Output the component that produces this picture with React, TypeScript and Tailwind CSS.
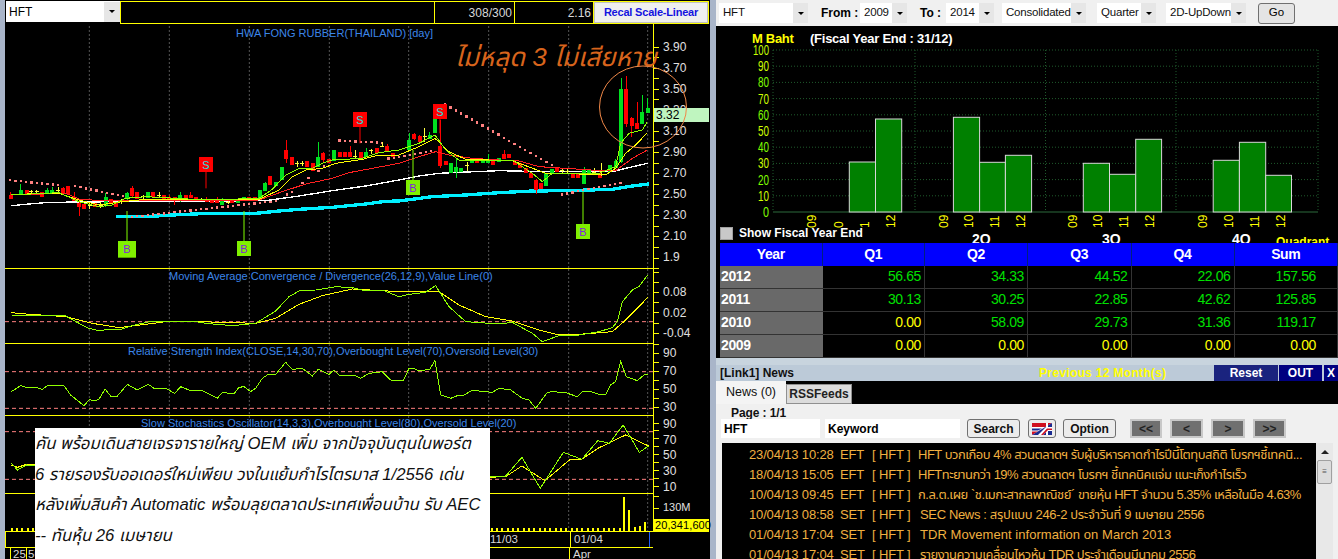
import React from 'react';

const SANS = "font-['Liberation_Sans','Noto_Sans_Thai','Noto_Sans',sans-serif]";

// all chart coordinates below are in 3x page pixels, read off the screenshot
type Pt = [number, number];
const line = (pts: Pt[], dy = 0) => pts.map(([x, y]) => `${x},${y + dy}`).join(' ');
const z2 = (pts: Pt[]): Pt[] => pts.map(([x, y]) => [x + 1200, y]);

const GRID_X = [271, 511, 751, 991, 1229, 1469, 1709, 1946];

// kind, x, bodyTop, bodyBottom, wickHigh, wickLow
type Candle = ['r' | 'g', number, number, number, number?, number?];
const CANDLES: Candle[] = [
  ['r', 35, 585, 597, 575], ['g', 65, 570, 583, 552], ['r', 83, 571, 583], ['r', 130, 577, 590],
  ['g', 145, 570, 583, 565], ['g', 160, 570, 583, 560], ['r', 193, 565, 580, 560], ['r', 208, 558, 583],
  ['r', 225, 590, 603, 577], ['r', 241, 610, 622, 600, 648], ['r', 256, 613, 627], ['r', 288, 610, 620],
  ['g', 320, 590, 615, 578, 620], ['r', 336, 598, 612], ['r', 352, 610, 620], ['g', 385, 578, 597, 575, 600],
  ['r', 400, 563, 587, 558, 590], ['r', 415, 577, 598], ['g', 448, 576, 595], ['r', 463, 576, 592],
  ['r', 496, 586, 597], ['r', 511, 592, 600, 586], ['r', 527, 592, 602, 590, 615], ['g', 544, 586, 597, 575, 607],
  ['r', 560, 586, 597], ['r', 575, 586, 595, 577], ['r', 592, 590, 600], ['r', 623, 598, 607, 590],
  ['r', 640, 600, 608], ['r', 655, 600, 610, 592], ['g', 670, 603, 615, 595], ['r', 700, 603, 610],
  ['g', 718, 598, 608], ['g', 735, 591, 600], ['r', 751, 591, 600], ['r', 767, 591, 600],
  ['g', 783, 570, 597], ['g', 799, 548, 572, 545], ['r', 814, 528, 555], ['g', 830, 545, 558],
  ['g', 848, 500, 540], ['r', 862, 450, 478, 420, 490], ['r', 878, 472, 495], ['r', 925, 483, 500],
  ['r', 941, 490, 512], ['g', 958, 470, 500, 426], ['r', 973, 458, 480, 455, 485], ['r', 989, 478, 490],
  ['g', 1006, 450, 483], ['r', 1022, 456, 472], ['r', 1038, 456, 472], ['r', 1053, 456, 472, 437],
  ['r', 1086, 456, 474], ['g', 1102, 456, 472, 445], ['r', 1133, 445, 458], ['r', 1165, 437, 455, 432],
  ['r', 1182, 458, 470], ['g', 1230, 420, 450, 398], ['r', 1245, 403, 417, 400, 420], ['r', 1262, 408, 425, 405],
  ['g', 1292, 405, 418, 395], ['g', 1308, 358, 400], ['r', 1324, 437, 497, 360, 505], ['r', 1340, 483, 495],
  ['g', 1357, 490, 518], ['g', 1372, 500, 515, 477, 533], ['g', 1387, 505, 515], ['g', 1420, 478, 490],
  ['r', 1435, 473, 490], ['g', 1452, 478, 488], ['g', 1468, 478, 488, 463], ['r', 1483, 480, 495],
  ['g', 1500, 473, 485], ['r', 1516, 462, 478, 450], ['r', 1530, 462, 475], ['r', 1548, 485, 495],
  ['r', 1563, 490, 503], ['r', 1580, 505, 520], ['r', 1595, 520, 533], ['r', 1612, 540, 570, 538, 583],
  ['r', 1627, 550, 568], ['g', 1642, 518, 558], ['g', 1659, 507, 518], ['r', 1675, 505, 515], ['r', 1722, 520, 533],
  ['r', 1738, 522, 533], ['g', 1755, 510, 552, 500], ['g', 1770, 510, 520], ['r', 1802, 520, 533],
  ['g', 1834, 495, 515], ['g', 1850, 482, 505, 478], ['g', 1866, 268, 485, 233, 490], ['r', 1882, 268, 372, 228, 382],
  ['r', 1898, 355, 378, 350, 410], ['r', 1914, 368, 388, 305], ['g', 1930, 335, 372, 285], ['g', 1946, 325, 340, 295],
];
// doji candles: x, y, high, low
const CROSSES: [number, number, number, number][] = [
  [97, 575, 570, 583], [113, 575, 570, 583], [177, 570, 560, 578], [272, 615, 606, 628], [305, 615, 606, 625],
  [368, 605, 598, 612], [432, 590, 584, 597], [480, 585, 575, 592], [608, 597, 595, 600], [687, 606, 600, 612],
  [894, 490, 482, 500], [909, 490, 482, 497], [1069, 468, 450, 475], [1117, 452, 447, 462], [1150, 440, 425, 442],
  [1277, 410, 385, 425], [1405, 497, 485, 513], [1690, 512, 505, 518], [1705, 513, 505, 520], [1785, 518, 505, 525],
  [1806, 515, 490, 528],
];

const MA_WHITE: Pt[] = [[37, 617], [90, 612], [150, 607], [470, 604], [800, 602], [900, 588], [1000, 572], [1100, 558], [1200, 540], [1260, 528], [1320, 520], [1380, 517], [1500, 512], [1640, 515], [1840, 515], [1880, 505], [1946, 490]];
const MA_CYAN: Pt[] = [[350, 650], [440, 650], [520, 645], [630, 640], [770, 640], [840, 633], [900, 628], [1000, 622], [1100, 612], [1160, 604], ...z2([[0, 603], [100, 590], [200, 585], [300, 578], [400, 573], [500, 572], [640, 568], [700, 558], [750, 552]])];
const MA_RED: Pt[] = [[37, 585], [200, 580], [240, 597], [280, 600], [400, 600], [620, 603], [780, 600], [850, 575], [920, 552], [1000, 535], [1050, 518], [1120, 505], ...z2([[0, 490], [60, 470], [110, 455], [150, 465], [220, 475], [300, 480], [350, 480], [420, 500], [500, 505], [620, 513], [650, 512], [700, 475], [745, 450]])];
const MA_YELLOW: Pt[] = [[37, 583], [180, 580], [240, 600], [300, 615], [370, 605], [440, 598], [620, 600], [780, 598], [840, 570], [880, 530], [920, 510], [970, 505], [1010, 490], [1090, 478], [1140, 465], ...z2([[0, 465], [60, 440], [108, 415], [150, 455], [200, 478], [340, 482], [420, 512], [440, 520], [540, 522], [620, 525], [650, 505], [680, 460], [710, 435], [745, 398]])];
const MA_LIME: Pt[] = [[37, 585], [180, 578], [240, 605], [300, 620], [340, 615], [380, 595], [440, 590], [620, 600], [780, 595], [820, 568], [860, 525], [900, 505], [940, 505], [970, 490], [1000, 480], [1090, 475], [1140, 458], ...z2([[0, 450], [60, 430], [108, 405], [140, 450], [180, 480], [340, 480], [400, 520], [430, 545], [460, 520], [600, 520], [650, 500], [665, 430], [690, 400], [730, 390], [745, 365]])];

const sar = (a: Pt, b: Pt) => {
  const n = Math.round((b[0] - a[0]) / 16);
  return Array.from({ length: n + 1 }, (_, i): Pt => [a[0] + i * 16, a[1] + ((b[1] - a[1]) * i) / Math.max(n, 1)]);
};
const SAR: Pt[] = [
  ...sar([30, 537], [178, 552]), ...sar([225, 555], [365, 585]), ...sar([395, 647], [830, 600]),
  [860, 580], [875, 572], [907, 545], [925, 530], [955, 510], [972, 495], ...sar([1018, 418], [1150, 425]),
  ...sar([1165, 472], [1300, 450]), ...sar([1335, 310], [1670, 500]), ...sar([1685, 580], [1865, 545]),
];

const MACD_LIME: Pt[] = [[37, 150], [200, 153], [240, 175], [270, 190], [300, 197], [340, 192], [370, 192], [400, 182], [460, 168], [580, 168], [620, 175], [700, 182], [770, 175], [830, 138], [870, 95], [900, 78], [950, 75], [1010, 65], [1060, 68], [1090, 75], [1150, 75], ...z2([[0, 95], [30, 88], [80, 82], [110, 62], [150, 125], [200, 170], [300, 177], [340, 172], [400, 205], [430, 230], [480, 212], [540, 210], [600, 200], [640, 188], [655, 170], [670, 110], [700, 75], [720, 65], [746, 30]])];
const MACD_YELLOW: Pt[] = [[37, 143], [80, 147], [200, 155], [280, 175], [360, 188], [440, 178], [500, 170], [600, 170], [770, 175], [830, 160], [900, 118], [970, 92], [1060, 72], ...z2([[0, 80], [120, 80], [180, 120], [260, 155], [340, 168], [420, 195], [480, 210], [540, 208], [640, 200], [680, 165], [720, 125], [746, 97]])];
const RSI: Pt[] = [[37, 380], [65, 362], [80, 367], [110, 367], [130, 373], [145, 362], [195, 362], [215, 390], [255, 422], [272, 403], [285, 408], [300, 403], [318, 372], [335, 393], [355, 393], [385, 358], [415, 375], [448, 358], [465, 370], [500, 370], [527, 385], [545, 365], [570, 375], [605, 375], [655, 400], [670, 382], [705, 387], [720, 367], [735, 365], [755, 380], [770, 370], [790, 340], [805, 330], [830, 328], [860, 292], [880, 313], [910, 310], [940, 333], [958, 313], [990, 328], [1005, 315], [1020, 330], [1065, 330], [1085, 340], [1110, 325], [1150, 320], [1175, 345], ...z2([[0, 347], [14, 345], [30, 310], [45, 310], [60, 318], [92, 313], [108, 287], [125, 390], [155, 400], [175, 392], [190, 393], [220, 376], [280, 382], [300, 370], [335, 375], [370, 400], [390, 405], [410, 430], [445, 382], [460, 380], [500, 383], [535, 395], [550, 380], [575, 380], [600, 388], [620, 388], [635, 360], [650, 350], [665, 290], [682, 335], [715, 347], [735, 330], [746, 328]])];
const sto = (pts: Pt[]): Pt[] => pts.map(([x, y]) => [x * 1.382, y]);
const STO_LIME = sto([[27, 130], [40, 150], [60, 135], [1060, 170], [1100, 168], [1135, 112], [1175, 205], [1225, 97], [1265, 118], [1300, 62], [1325, 70], [1355, 15], [1390, 97], [1410, 78]]);
const STO_YELLOW = sto([[27, 135], [40, 142], [60, 133], [1060, 172], [1100, 170], [1135, 138], [1185, 182], [1240, 118], [1265, 118], [1300, 85], [1360, 45], [1410, 78]]);

const VOLUME = Array.from({ length: 115 }, (_, i) => 35 + i * 16);

const Poly = ({ pts, color, width = 3, dy = 0 }: { pts: Pt[]; color: string; width?: number; dy?: number }) => (
  <polyline points={line(pts, dy)} fill="none" stroke={color} strokeWidth={width} shapeRendering="crispEdges" />
);

const Grid = ({ y, h }: { y: number; h: number }) => (
  <>
    {GRID_X.map((x) => (
      <line key={x} x1={x} x2={x} y1={y} y2={y + h} stroke="#555" strokeWidth={3} strokeDasharray="6 6" />
    ))}
  </>
);

const Level = ({ y }: { y: number }) => (
  <line x1={18} x2={1962} y1={y} y2={y} stroke="#ff7f7f" strokeWidth={3} strokeDasharray="12 9" />
);

const Marker = ({ x, y, w, h, kind, y1, y2 }: { x: number; y: number; w: number; h: number; kind: 'S' | 'B'; y1: number; y2: number }) => {
  const sell = kind === 'S';
  return (
    <g>
      <line x1={x + w / 2} x2={x + w / 2} y1={y1} y2={y2} stroke={sell ? '#ff0000' : '#80ff00'} strokeWidth={3} />
      <rect x={x} y={y} width={w} height={h} fill={sell ? '#ff0000' : '#80f000'} />
      <text x={x + w / 2} y={y + h / 2 + 12} textAnchor="middle" fontSize={33} fontFamily="Liberation Sans" fill={sell ? '#20e0e0' : '#8020e0'}>
        {kind}
      </text>
    </g>
  );
};

const PriceChart = () => (
  <svg className="absolute inset-0 h-full w-full" viewBox="18 72 1944 732" preserveAspectRatio="none">
    <Grid y={78} h={726} />
    <Poly pts={MA_CYAN} color="#00f0ff" width={10} />
    <Poly pts={MA_WHITE} color="#ffffff" width={4} />
    {SAR.map(([x, y], i) => (
      <rect key={i} x={x} y={y} width={7} height={7} fill="#ff8080" shapeRendering="crispEdges" />
    ))}
    {CANDLES.map(([kind, x, top, bot, hi, lo], i) => {
      const color = kind === 'r' ? '#ff0000' : '#00e020';
      return (
        <g key={i} shapeRendering="crispEdges">
          <rect x={x - 1.5} y={hi ?? top} width={3} height={(lo ?? bot) - (hi ?? top)} fill={color} />
          <rect x={x - 6} y={top} width={12} height={bot - top} fill={color} />
        </g>
      );
    })}
    {CROSSES.map(([x, y, hi, lo], i) => (
      <g key={i} shapeRendering="crispEdges">
        <rect x={x - 1.5} y={hi} width={3} height={lo - hi} fill="#ffff40" />
        <rect x={x - 6} y={y - 1.5} width={12} height={3} fill="#ffff40" />
      </g>
    ))}
    <Poly pts={MA_RED} color="#ff2020" />
    <Poly pts={MA_YELLOW} color="#ffff00" />
    <Poly pts={MA_LIME} color="#90ff00" />
    <Marker kind="S" x={600} y={471} w={42} h={45} y1={516} y2={565} />
    <Marker kind="S" x={1062} y={336} w={42} h={45} y1={381} y2={430} />
    <Marker kind="S" x={1302} y={312} w={42} h={45} y1={357} y2={400} />
    <Marker kind="B" x={357} y={723} w={54} h={50} y1={633} y2={723} />
    <Marker kind="B" x={714} y={723} w={42} h={45} y1={633} y2={723} />
    <Marker kind="B" x={1221} y={540} w={42} h={45} y1={450} y2={540} />
    <Marker kind="B" x={1731} y={672} w={42} h={45} y1={575} y2={672} />
  </svg>
);

const AXIS_TICKS: Record<string, number[]> = {
  price: Array.from({ length: 22 }, (_, i) => 23 + i * 10.55),
  macd: Array.from({ length: 7 }, (_, i) => 3 + i * 10.2),
  rsi: Array.from({ length: 8 }, (_, i) => 0 + i * 9),
  sto: Array.from({ length: 10 }, (_, i) => 7 + i * 7.9),
  vol: [2, 14, 26],
};

function Axis({ ticks, children, className }: { ticks: number[]; children: React.ReactNode; className: string }) {
  return (
    <div className={`relative w-[56px] border-l border-[#ffff00] text-[12px] leading-none text-[#e0e0e0] ${className}`}>
      <svg className="absolute left-0 top-0 h-full w-[6px]">
        {ticks.map((y) => (
          <line key={y} x1={0} x2={5} y1={y} y2={y} stroke="#ffff00" strokeWidth={1} shapeRendering="crispEdges" />
        ))}
      </svg>
      {children}
    </div>
  );
}

const Label = ({ value, className }: { value: string; className: string }) => (
  <div className={`flex items-center pl-[9px] ${className}`}>{value}</div>
);

function Pane({ className, title, titleClass, axis, children }: { className: string; title?: string; titleClass?: string; axis: React.ReactNode; children: React.ReactNode }) {
  return (
    <div className={`flex ${className}`}>
      <div className="relative w-[648px] border-b border-[#ffff00]">
        {children}
        {title && <div className={`absolute whitespace-nowrap text-[11px] leading-none text-[#3c86e8] ${titleClass}`}>{title}</div>}
      </div>
      {axis}
    </div>
  );
}

const DropArrow = ({ className = 'w-[15px]' }: { className?: string }) => (
  <div className={`flex h-[20px] items-center justify-center bg-[#e6e6e6] ${className}`}>
    <span className="h-0 w-0 border-x-[3px] border-t-[3px] border-x-transparent border-t-black" />
  </div>
);

function Field({ text, fieldClass, arrowClass, wrapClass }: { text: string; fieldClass: string; arrowClass?: string; wrapClass?: string }) {
  return (
    <div className={`flex items-center ${wrapClass ?? ''}`}>
      <div className={`flex h-[20px] items-center bg-white pl-[4px] text-[11.5px] tracking-[-0.2px] text-[#111] ${fieldClass}`}>{text}</div>
      <DropArrow className={arrowClass} />
    </div>
  );
}

const QUARTER_LABELS: [number, string][] = [
  [812, '09'], [839, '0'], [865, '1'], [891, '12'],
  [944, '09'], [969, '10'], [995, '11'], [1021, '12'],
  [1073, '09'], [1098, '10'], [1124, '11'], [1150, '12'],
  [1203, '09'], [1229, '10'], [1255, '11'], [1281, '12'],
];
const BAR_RECTS: [number, number, number][] = [
  [849.3, 26.2, 162], [875.5, 26.2, 119],
  [953.4, 26.2, 117.3], [979.6, 25.8, 162.3], [1005.4, 26.2, 155.3],
  [1083.3, 26.2, 163.3], [1109.5, 26.2, 174.3], [1135.7, 25.9, 139.3],
  [1213.2, 26.2, 160.3], [1239.4, 26.3, 142.3], [1265.7, 25.8, 175.3],
];

const FundChart = () => (
  <svg className="absolute inset-0 h-full w-full" viewBox="716 26 622 217">
    {Array.from({ length: 11 }, (_, i) => {
      const y = 212 - i * 16.2;
      return (
        <g key={i}>
          <line x1={773} x2={1318} y1={y} y2={y} stroke={i === 0 ? '#2c6b3c' : '#1f5a2c'} strokeDasharray={i === 0 ? undefined : '1 2'} />
          <text x={769} y={y + 5} textAnchor="end" fontSize={14} fontFamily="Liberation Sans" fill={i >= 10 ? '#c8ff00' : i % 2 ? '#d0ff00' : '#80ff00'} textLength={i === 10 ? 16 : i === 0 ? 6 : 11} lengthAdjust="spacingAndGlyphs">
            {i * 10}
          </text>
        </g>
      );
    })}
    {[773, 915, 1045.5, 1176, 1318].map((x) => (
      <line key={x} x1={x} x2={x} y1={50} y2={212} stroke="#1f5a2c" strokeDasharray="1 2" />
    ))}
    {BAR_RECTS.map(([x, w, top]) => (
      <rect key={x} x={x} y={top} width={w} height={212 - top} fill="#008000" stroke="#d8d8d8" strokeWidth={1} />
    ))}
    {QUARTER_LABELS.map(([x, t], i) => (
      <text key={i} transform={`translate(${x + 4} 228) rotate(-90)`} fontSize={12} fontFamily="Liberation Sans" fill="#ffff00">
        {t}
      </text>
    ))}
    {[['2Q', 972], ['3Q', 1102], ['4Q', 1232]].map(([t, x]) => (
      <text key={t as string} x={x as number} y={244} fontSize={14} fontWeight="bold" fontFamily="Liberation Sans" fill="#ffffff">
        {t}
      </text>
    ))}
    <text x={1276} y={246} fontSize={12} fontWeight="bold" fontFamily="Liberation Sans" fill="#ffff00">
      Quadrant
    </text>
  </svg>
);

const TABLE = [
  ['2012', '56.65', '34.33', '44.52', '22.06', '157.56'],
  ['2011', '30.13', '30.25', '22.85', '42.62', '125.85'],
  ['2010', '0.00', '58.09', '29.73', '31.36', '119.17'],
  ['2009', '0.00', '0.00', '0.00', '0.00', '0.00'],
];
const TABLE_COLS = 'grid grid-cols-[102.5px_102.5px_103px_103.5px_103px_1fr]';

// date, source, title, spacing of the title (the Thai face here runs wider than the original's)
const NEWS = [
  ['23/04/13 10:28', 'EFT', 'HFT บวกเกือบ 4% สวนตลาดฯ รับผู้บริหารคาดกำไรปีนี้โตทุบสถิติ โบรกฯชี้เทคนิ...', 'tracking-[-0.5px]'],
  ['18/04/13 15:05', 'EFT', 'HFTทะยานกว่า 19% สวนตลาดฯ โบรกฯ ชี้เทคนิคแจ่ม แนะเก็งกำไรเร็ว', 'tracking-[-0.5px]'],
  ['10/04/13 09:45', 'EFT', 'ก.ล.ต.เผย `ช.เมกะสากลพาณิชย์´ ขายหุ้น HFT จำนวน 5.35% เหลือในมือ 4.63%', 'tracking-[-0.5px]'],
  ['10/04/13 08:58', 'SET', 'SEC News : สรุปแบบ 246-2 ประจำวันที่ 9 เมษายน 2556', 'tracking-[-0.35px] pl-[2px]'],
  ['01/04/13 17:04', 'SET', 'TDR Movement information on March 2013', 'tracking-[0.05px] pl-[2px]'],
  ['01/04/13 17:04', 'SET', 'รายงานความเคลื่อนไหวหุ้น TDR ประจำเดือนมีนาคม 2556', 'tracking-[-0.5px] pl-[2px]'],
];

const OVERLAY = [
  'คัน พร้อมเดินสายเจรจารายใหญ่ OEM เพิ่ม จากปัจจุบันตุนในพอร์ต',
  '6 รายรองรับออเดอร์ใหม่เพียบ วงในแย้มกำไรไตรมาส 1/2556 เด่น',
  'หลังเพิ่มสินค้า Automatic พร้อมลุยตลาดประเทศเพื่อนบ้าน รับ AEC',
  '-- ทันหุ้น 26 เมษายน',
];

const Btn = ({ children, className }: { children: React.ReactNode; className: string }) => (
  <div className={`flex h-[19px] items-center justify-center rounded-[3px] border border-[#707070] bg-[#ececec] text-[12px] font-bold text-[#111] ${className}`}>{children}</div>
);

const NavBtn = ({ children, className }: { children: React.ReactNode; className: string }) => (
  <div className={`flex h-[19px] items-center justify-center border-2 border-[#c8c8c8] bg-[#707070] text-[12px] text-[#222] ${className}`}>{children}</div>
);

export default function App() {
  return (
    <div className={`relative flex h-[559px] w-[1338px] overflow-hidden bg-[#a9b5c9] ${SANS}`}>
      <div className="ml-[5px] w-[705px] bg-black">
        {/* top strip */}
        <div className="flex h-[24px] pl-px pt-px">
          <div className="flex h-[21px] w-[114px] items-center bg-white">
            <span className="flex-1 pl-[3px] text-[12px] text-black">HFT</span>
            <DropArrow className="w-[16px]" />
          </div>
          <div className="flex h-[23px] w-[589px] border border-[#ffff00] text-[12px] text-[#d8d8d8]">
            <div className="w-[313px]" />
            <div className="flex w-[80px] items-center justify-end border-l border-[#ffff00] pr-[2px]">308/300</div>
            <div className="flex w-[80px] items-center justify-end border-x border-[#ffff00] pr-[2px]">2.16</div>
            <div className="flex w-[114px] items-center justify-center border border-[#c0c0c0] bg-[#efefef] text-[11px] font-bold tracking-[-0.2px] text-[#1414e0]">Recal Scale-Linear</div>
          </div>
        </div>

        <Pane
          className="h-[245px]"
          title="HWA FONG RUBBER(THAILAND) [day]"
          titleClass="left-[231px] top-[4px]"
          axis={
            <Axis ticks={AXIS_TICKS.price} className="pt-[12px]">
              {['3.90', '3.70', '3.50', '3.30', '3.10', '2.90', '2.70', '2.50', '2.30', '2.10', '1.9'].map((v) => (
                <Label key={v} value={v} className="h-[21.1px]" />
              ))}
            </Axis>
          }
        >
          <PriceChart />
        </Pane>

        <Pane
          className="h-[75px]"
          title="Moving Average Convergence / Divergence(26,12,9),Value Line(0)"
          titleClass="left-[164px] top-[2px]"
          axis={
            <Axis ticks={AXIS_TICKS.macd} className="pt-[13px]">
              {['0.08', '0.02', '-0.04'].map((v) => (
                <Label key={v} value={v} className="h-[20.5px]" />
              ))}
            </Axis>
          }
        >
          <svg className="absolute inset-0 h-full w-full" viewBox="18 807 1944 222" preserveAspectRatio="none">
            <Grid y={807} h={222} />
            <Level y={965} />
            <Poly pts={MACD_YELLOW} color="#ffff00" dy={795} />
            <Poly pts={MACD_LIME} color="#90ff00" dy={795} />
          </svg>
        </Pane>

        <Pane
          className="h-[72px]"
          title="Relative Strength Index(CLOSE,14,30,70),Overbought Level(70),Oversold Level(30)"
          titleClass="left-[123px] top-[2px]"
          axis={
            <Axis ticks={AXIS_TICKS.rsi} className="">
              {['90', '70', '50', '30'].map((v) => (
                <Label key={v} value={v} className="h-[18px]" />
              ))}
            </Axis>
          }
        >
          <svg className="absolute inset-0 h-full w-full" viewBox="18 1032 1944 213" preserveAspectRatio="none">
            <Grid y={1032} h={213} />
            <Level y={1115} />
            <Level y={1225} />
            <Poly pts={RSI} color="#90ff00" dy={795} />
          </svg>
        </Pane>

        <Pane
          className="h-[78px]"
          title="Slow Stochastics Oscillator(14,3,3),Overbought Level(80),Oversold Level(20)"
          titleClass="left-[136px] top-[2px]"
          axis={
            <Axis ticks={AXIS_TICKS.sto} className="">
              {['90', '70', '50', '30', '10'].map((v) => (
                <Label key={v} value={v} className="h-[15.75px]" />
              ))}
            </Axis>
          }
        >
          <svg className="absolute inset-0 h-full w-full" viewBox="18 1248 1944 231" preserveAspectRatio="none">
            <Grid y={1248} h={231} />
            <Level y={1295} />
            <Level y={1438} />
            <Poly pts={STO_YELLOW} color="#ffff00" dy={1260} />
            <Poly pts={STO_LIME} color="#90ff00" dy={1260} />
          </svg>
        </Pane>

        <Pane
          className="h-[38px]"
          axis={
            <Axis ticks={AXIS_TICKS.vol} className="pt-[6px]">
              <Label value="130M" className="h-[15px] text-[11px]" />
              <div className="mt-[4px] flex h-[13px] w-[55px] items-center bg-[#ffff00] pl-[1px] text-[11px] tracking-[0.1px] text-black">20,341,600</div>
            </Axis>
          }
        >
          <svg className="absolute inset-0 h-full w-full" viewBox="18 1482 1944 111" preserveAspectRatio="none">
            <Grid y={1482} h={111} />
            {VOLUME.map((x) => (
              <rect key={x} x={x} y={1584} width={6} height={9} fill="#ffff00" shapeRendering="crispEdges" />
            ))}
            {[[1872, 1491], [1887, 1530], [1905, 1581], [1920, 1578], [1935, 1565]].map(([x, y]) => (
              <rect key={x} x={x} y={y} width={6} height={1593 - y} fill="#ffff00" shapeRendering="crispEdges" />
            ))}
          </svg>
        </Pane>

        {/* time axis */}
        <div className="w-[648px] text-[11.5px] text-[#d8d8d8]">
          <div className="flex h-[15px] border-l border-[#ffff00]">
            <div className="flex w-[564px] items-center justify-end pr-[52px]">11/03</div>
            <div className="flex w-[80px] items-center border-x border-x-[#ffff00] border-r-[#2060ff] pl-[3px]">01/04</div>
          </div>
          <div className="flex h-[12px] border-t border-[#ffff00]">
            <div className="ml-[5px] w-[17px] border-x border-[#ffff00] pl-[2px] leading-[12px]">25</div>
            <div className="w-[542px] pl-[1px] leading-[12px]">56</div>
            <div className="border-l border-[#ffff00] pl-[3px] leading-[12px]">Apr</div>
          </div>
        </div>
      </div>

      <div className="ml-[6px] flex w-[622px] flex-col bg-black">
        {/* filter bar */}
        <div className="flex h-[26px] items-center bg-[#f0f0f0] pl-[3px] text-[12px] text-black">
          <Field text="HFT" fieldClass="w-[74px]" />
          <span className="ml-[13px] w-[39px] font-bold">From :</span>
          <Field text="2009" fieldClass="w-[32px]" />
          <span className="ml-[13px] w-[26px] font-bold">To :</span>
          <Field text="2014" fieldClass="w-[33px]" />
          <Field text="Consolidated" fieldClass="w-[69px]" wrapClass="ml-[8px]" />
          <Field text="Quarter" fieldClass="w-[44px]" wrapClass="ml-[11px]" />
          <Field text="2D-UpDown" fieldClass="w-[65px]" wrapClass="ml-[10px]" />
          <div className="ml-[12px] flex h-[21px] w-[37px] items-center justify-center rounded-[3px] border border-[#707070] bg-[#e4e4e4] text-[11.5px]">Go</div>
        </div>

        {/* quarterly chart */}
        <div className="relative h-[217px]">
          <FundChart />
          <div className="absolute left-[36px] top-[3px] text-[13px] font-bold tracking-[-0.3px] text-[#ffff00]">M Baht</div>
          <div className="absolute left-[94px] top-[3px] text-[13px] font-bold tracking-[-0.25px] text-white">(Fiscal Year End : 31/12)</div>
          <div className="absolute left-[4px] top-[198px] flex items-center gap-[6px]">
            <div className="h-[13px] w-[13px] border border-[#a0a0a0] bg-[#c8c8c8]" />
            <span className="text-[12px] font-bold text-white">Show Fiscal Year End</span>
          </div>
        </div>

        {/* quarter table */}
        <div className="ml-[4px] text-[14px] tracking-[-0.4px]">
          <div className={`${TABLE_COLS} h-[23px] bg-[#0000ff] text-center font-bold leading-[23px] text-white`}>
            {['Year', 'Q1', 'Q2', 'Q3', 'Q4', 'Sum'].map((h) => (
              <div key={h} className="border-r border-[#002080]">{h}</div>
            ))}
          </div>
          {TABLE.map(([year, ...cells]) => (
            <div key={year} className={`${TABLE_COLS} h-[23px] border-b border-[#333] leading-[21px]`}>
              <div className="bg-[#696969] pl-[1px] font-bold text-white">{year}</div>
              {cells.map((v, i) => (
                <div key={i} className={`border-r border-[#333] text-right ${i === 4 ? 'pr-[21px]' : 'pr-[3px]'} ${v === '0.00' ? 'text-[#ffff00]' : 'text-[#00e000]'}`}>
                  {v}
                </div>
              ))}
            </div>
          ))}
        </div>

        <div className="h-[7px] bg-[#c8d4de]" />

        {/* news header */}
        <div className="flex h-[16px] items-center bg-[#bccad8] text-[12px] font-bold leading-none">
          <span className="ml-[4px] w-[319px] text-[#111]">[Link1] News</span>
          <span className="w-[175px] tracking-[0.3px] text-[#ffff00]">Previous 12 Month(s)</span>
          <div className="flex h-[16px] w-[64px] items-center justify-center bg-[#1a237e] text-white">Reset</div>
          <div className="ml-[1px] flex h-[16px] w-[43px] items-center justify-center bg-[#000080] text-white">OUT</div>
          <div className="ml-[2px] flex h-[16px] flex-1 items-center justify-center bg-[#000080] text-white">X</div>
        </div>

        {/* tabs */}
        <div className="flex h-[23px] items-end text-[12.5px]">
          <div className="flex h-[23px] w-[70px] items-center justify-center bg-[#f4f4f4] text-[#111]">News (0)</div>
          <div className="flex h-[20px] w-[66px] items-center justify-center border border-[#909090] bg-[#dcdcdc] text-[12px] font-bold text-[#222]">RSSFeeds</div>
        </div>

        {/* news panel */}
        <div className="flex min-h-0 flex-1 flex-col bg-[#f0f0f0] pl-[6px] pr-[5px]">
          <div className="pl-[9px] pt-[4px] text-[12px] font-bold leading-[11px] tracking-[-0.1px] text-[#111]">Page : 1/1</div>
          <div className="flex h-[24px] items-start text-[12px] font-bold">
            <div className="ml-[-1px] flex h-[19px] w-[99px] items-center bg-white pl-[3px]">HFT</div>
            <div className="ml-[5px] flex h-[19px] w-[135px] items-center bg-white pl-[3px]">Keyword</div>
            <Btn className="ml-[7px] w-[53px]">Search</Btn>
            <div className="ml-[8px] flex h-[19px] w-[28px] items-center justify-center rounded-[3px] border border-[#707070] bg-[#ececec]">
              <svg viewBox="0 0 20 12" className="h-[12px] w-[20px]">
                <rect width="20" height="12" fill="#fff" />
                <path d="M0 0h20L0 12z" fill="#d01020" />
                <path d="M0 4h14L6 8.5H0z" fill="#fff" />
                <path d="M0 5.5h10L6 7.5H0z" fill="#1a2a90" />
                <path d="M20 0v12H0z" fill="#1a2a90" />
                <path d="M20 4h-6l-8 8h5l4-4h5zM14 0v12h2V0z" fill="#fff" />
                <path d="M20 5.5h-5l-6 6.5h2l5-5h4z" fill="#d01020" />
              </svg>
            </div>
            <Btn className="ml-[7px] w-[53px]">Option</Btn>
            <NavBtn className="ml-[14px] w-[32px]">&lt;&lt;</NavBtn>
            <NavBtn className="ml-[8px] w-[33px]">&lt;</NavBtn>
            <NavBtn className="ml-[8px] w-[34px]">&gt;</NavBtn>
            <NavBtn className="ml-[8px] w-[33px]">&gt;&gt;</NavBtn>
          </div>
          <div className="flex min-h-0 flex-1 overflow-hidden">
            <div className="w-[594px] bg-black pt-[2px] text-[13px] leading-[20px] tracking-[-0.15px] text-[#f0b040]">
              {NEWS.map(([date, src, title, spacing]) => (
                <div key={title} className="flex whitespace-nowrap">
                  <div className="ml-[27px] w-[91px]">{date}</div>
                  <div className="w-[32px]">{src}</div>
                  <div className="w-[46px]">[ HFT ]</div>
                  <div className={spacing}>{title}</div>
                </div>
              ))}
            </div>
            <div className="flex w-[17px] flex-col items-center bg-[#e8e8e8] pt-[7px]">
              <span className="h-0 w-0 border-x-[4px] border-b-[4px] border-x-transparent border-b-[#222]" />
              <div className="mt-[6px] flex h-[24px] w-[15px] items-center justify-center rounded-[2px] border border-[#a0a0a0] bg-[#dcdcdc] text-[8px] text-[#555]">≡</div>
            </div>
          </div>
        </div>
      </div>

      {/* hand annotations pasted on top of the chart */}
      <div className="absolute left-[654px] top-[108px] flex h-[14px] w-[55px] items-center bg-[#bff5bf] pl-[2px] text-[12px] leading-none text-black">3.32</div>
      <svg className="absolute left-[595px] top-[62px] h-[90px] w-[96px]" viewBox="0 0 96 90">
        <ellipse cx="48" cy="45" rx="43.5" ry="41" fill="none" stroke="#f08848" strokeWidth="1" />
      </svg>
      <div className="absolute left-[455px] top-[41px] whitespace-nowrap text-[26px] italic leading-[32px] text-[#d8641c]">ไม่หลุด 3 ไม่เสียหาย</div>
      <div className="absolute left-[35px] top-[428px] h-[131px] w-[455px] bg-white pt-[1px] text-[16.7px] italic leading-[30.5px] text-[#111]">
        {OVERLAY.map((t) => (
          <div key={t} className="whitespace-nowrap">{t}</div>
        ))}
      </div>
    </div>
  );
}
